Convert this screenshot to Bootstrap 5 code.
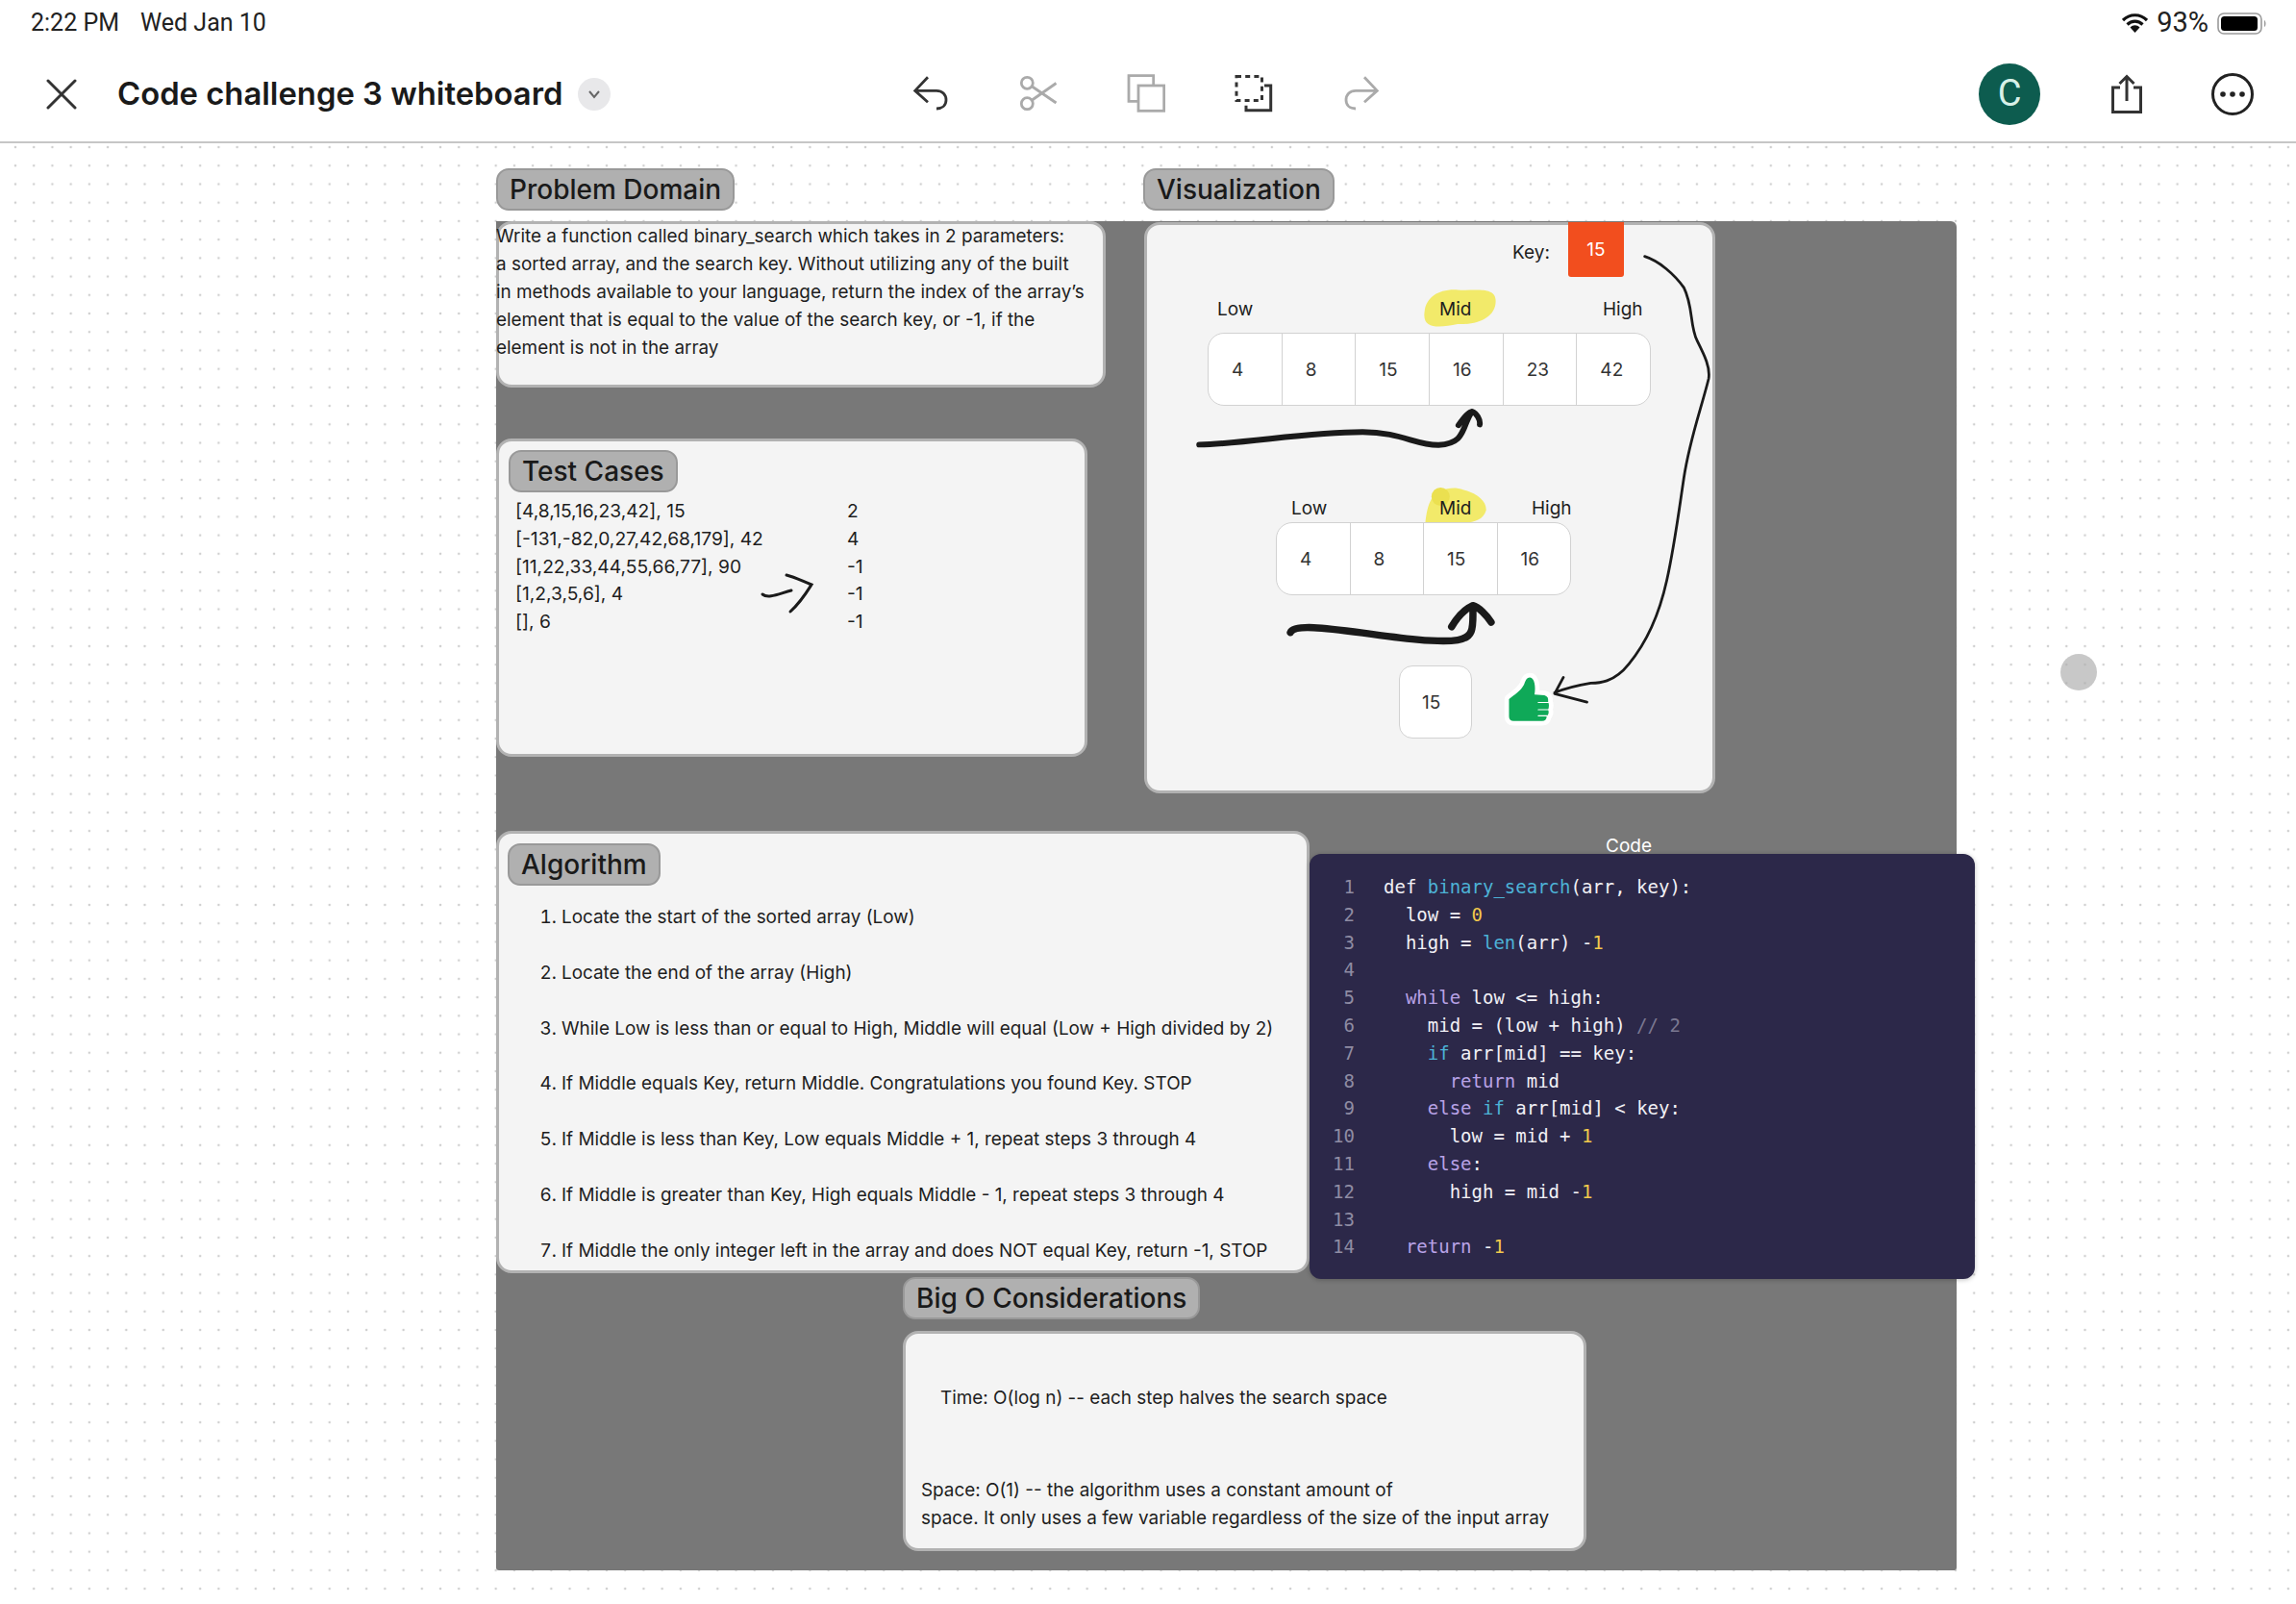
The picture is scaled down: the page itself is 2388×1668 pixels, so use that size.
<!DOCTYPE html>
<html>
<head>
  <title>Code challenge 3 whiteboard</title>
  <meta charset="UTF-8">
  <link href="https://cdn.jsdelivr.net/npm/bootstrap@5.3.2/dist/css/bootstrap.min.css" rel="stylesheet">
  <style>
    html, body {
      margin: 0;
      width: 2388px;
      height: 1668px;
      overflow: hidden;
      background: #fff;
      font-family: Inter, "Liberation Sans", sans-serif;
      color: #1e1e1e;
    }

    .top-area {
      height: 149px;
      border-bottom: 2px solid #c6c6c6;
    }

    .status-bar {
      height: 48px;
      padding: 0 30px 0 32px;
      font-family: Roboto, "Liberation Sans", sans-serif;
      font-size: 25px;
      color: #222;
    }

    .status-date { margin-left: 22px; }
    .status-pct { margin: 0 9px 0 9px; font-size: 29px; }

    .tool-bar {
      height: 99px;
      padding: 0 44px 0 48px;
    }

    .board-title {
      font-size: 32.8px;
      font-weight: 600;
      margin-left: 42px;
      color: #1a1a1a;
      white-space: nowrap;
    }

    .title-chevron {
      width: 34px;
      height: 34px;
      background: #e8e8ea;
      margin-left: 16px;
    }

    .edit-tools {
      gap: 72px;
      margin-left: 313px;
      margin-top: -1px;
    }

    .user-avatar {
      width: 64px;
      height: 64px;
      background: #0d5c4f;
      color: #d8f0e8;
      font-family: Roboto, "Liberation Sans", sans-serif;
      font-size: 38px;
      margin-right: 73px;
    }

    .share-icon { margin-right: 71px; }

    .canvas {
      height: 1519px;
      background-image: radial-gradient(circle, #cfcfcf 1.1px, transparent 1.6px);
      background-size: 19.23px 19.23px;
      background-position: 6.4px -5.6px;
    }

    .gray-panel {
      left: 516px;
      top: 81px;
      width: 1519px;
      height: 1403px;
      background: #787878;
      border-radius: 0 6px 3px 3px;
    }

    .wb-card {
      background: #f4f4f4;
      border: 3px solid #b2b2b2;
      border-radius: 16px;
      font-size: 18.9px;
      line-height: 29px;
      color: #1e1e1e;
    }

    .wb-label {
      background: #b0b0b0;
      border: 2px solid #999;
      border-radius: 13px;
      height: 44px;
      padding: 0 12px;
      font-size: 28px;
      font-weight: 500;
      line-height: 40px;
      color: #1a1a1a;
      white-space: nowrap;
    }

    .label-problem { left: 516px; top: 26px; }
    .label-viz { left: 1189px; top: 26px; }
    .label-test { left: 10px; top: 9px; }
    .label-algo { left: 9px; top: 10px; }
    .label-big { left: 939px; top: 1179px; }

    .card-problem { left: 516px; top: 81px; width: 634px; height: 173px; }
    .card-problem p { margin: -2px 0 0 -3px; }

    .card-test { left: 516px; top: 307px; width: 615px; height: 331px; padding: 58px 0 0 17px; font-size: 19.2px; line-height: 28.8px; }
    .test-input { width: 345px; }

    .card-viz { left: 1190px; top: 82px; width: 594px; height: 594px; }

    .card-algo { left: 516px; top: 715px; width: 846px; height: 460px; padding: 72px 0 0 0; }
    .card-algo ol { margin: 0; padding-left: 65px; }
    .card-algo li { margin-bottom: 28.8px; white-space: nowrap; }

    .card-big { left: 939px; top: 1235px; width: 711px; height: 229px; padding: 52px 0 0 16px; }
    .card-big p { margin: 0; }
    .time-line { padding-left: 20px; margin-bottom: 67px !important; }

    .viz-text { font-size: 19px; line-height: 29px; white-space: nowrap; }
    .key-text { left: 380px; top: 14px; }
    .key-box {
      left: 438px;
      top: -3px;
      width: 58px;
      height: 57px;
      background: #f24e1e;
      color: #fff;
      font-size: 19px;
      border-radius: 0 0 3px 3px;
    }

    .low-a { left: 73px; top: 73px; }
    .mid-a { left: 304px; top: 73px; }
    .high-a { left: 474px; top: 73px; }
    .low-b { left: 150px; top: 280px; }
    .mid-b { left: 304px; top: 280px; }
    .high-b { left: 400px; top: 280px; }

    .array-row {
      height: 76px;
      background: #fff;
      border: 1.5px solid #d2d2d2;
      border-radius: 17px;
      color: #333;
      font-size: 19px;
    }

    .array-a { left: 63px; top: 112px; width: 461px; }
    .array-b { left: 134px; top: 309px; width: 307px; }
    .array-cell {
      flex: 1 1 0;
      padding-left: 24px;
      border-left: 1.5px solid #d2d2d2;
      display: flex;
      align-items: center;
    }
    .array-cell:first-child { border-left: 0; }

    .answer-box {
      left: 262px;
      top: 458px;
      width: 76px;
      height: 76px;
      background: #fff;
      border: 1.5px solid #d2d2d2;
      border-radius: 14px;
      color: #333;
      font-size: 19px;
      padding-left: 23px;
    }

    .viz-ink {
      left: -13px;
      top: -14px;
      width: 620px;
      height: 620px;
      overflow: visible;
    }

    .test-ink { left: 272px; top: 128px; width: 60px; height: 48px; overflow: visible; }

    .code-title {
      left: 1362px;
      top: 717px;
      width: 664px;
      text-align: center;
      color: #fff;
      font-size: 19px;
      line-height: 28px;
    }

    .code-block {
      left: 1362px;
      top: 739px;
      width: 692px;
      height: 442px;
      background: #2c2849;
      border-radius: 12px;
      padding-top: 20px;
      box-shadow: 0 1px 5px rgba(0,0,0,.25);
      font-family: "DejaVu Sans Mono", "Liberation Mono", monospace;
      font-size: 19px;
      line-height: 28.8px;
      color: #f1f0f5;
    }

    .code-nums {
      width: 47px;
      text-align: right;
      color: #8f8ca3;
      margin-right: 30px;
    }

    .code-lines { margin: 0; font: inherit; color: inherit; overflow: visible; }
    .tk-fn { color: #4db2d6; }
    .tk-kw { color: #b8a2e6; }
    .tk-if { color: #4db2d6; }
    .tk-num { color: #f2c94c; }
    .tk-cm { color: #7b7891; }

    .pointer-dot {
      left: 2143px;
      top: 531px;
      width: 38px;
      height: 38px;
      background: rgba(170,170,170,.65);
    }
  </style>
</head>
<body>

<div class="top-area bg-white">
  <div class="status-bar d-flex align-items-center">
    <span>2:22 PM</span>
    <span class="status-date">Wed Jan 10</span>
    <span class="ms-auto d-flex align-items-center">
      <svg width="27" height="20" viewBox="0 0 27 20">
        <path d="M1 7 C8 0 19 0 26 7" fill="none" stroke="#111" stroke-width="3.2"/>
        <path d="M5.5 11.5 C10 7 17 7 21.5 11.5" fill="none" stroke="#111" stroke-width="3.2"/>
        <path d="M8.5 14.5 C11.5 11.5 15.5 11.5 18.5 14.5 L13.5 20 Z" fill="#111"/>
      </svg>
      <span class="status-pct">93%</span>
      <svg width="52" height="23" viewBox="0 0 52 23">
        <rect x="1" y="1" width="45" height="21" rx="6" fill="none" stroke="#9a9a9a" stroke-width="1.6"/>
        <rect x="4" y="4" width="38" height="15" rx="3.5" fill="#000"/>
        <path d="M49 8 C51 9 51 14 49 15 Z" fill="#9a9a9a"/>
      </svg>
    </span>
  </div>

  <div class="tool-bar d-flex align-items-center">
    <svg width="32" height="32" viewBox="0 0 32 32">
      <path d="M2 2 L30 30 M30 2 L2 30" stroke="#333" stroke-width="3" stroke-linecap="round"/>
    </svg>
    <span class="board-title">Code challenge 3 whiteboard</span>
    <span class="title-chevron rounded-circle d-flex align-items-center justify-content-center">
      <svg width="14" height="10" viewBox="0 0 14 10">
        <path d="M2 2 L7 8 L12 2" fill="none" stroke="#666" stroke-width="2"/>
      </svg>
    </span>

    <div class="edit-tools d-flex align-items-center">
      <svg width="40" height="40" viewBox="0 0 40 40" fill="none" stroke="#333" stroke-width="2.8">
        <path d="M17 3.3 L3.7 17.3 L17 29.3 M3.7 17.3 H26 C32 17.3 36 21.5 36 27 C36 32.5 32 36 26 36"/>
      </svg>
      <svg width="40" height="40" viewBox="0 0 40 40" fill="none" stroke="#aaa" stroke-width="2.8">
        <circle cx="8.3" cy="9.3" r="6"/>
        <circle cx="8.3" cy="30.7" r="6"/>
        <path d="M13.5 13 L38.5 30 M13.5 27 L38.5 9.5"/>
      </svg>
      <svg width="40" height="40" viewBox="0 0 40 40" fill="none" stroke="#aaa" stroke-width="2.8">
        <path d="M12 28.3 H2 V1.7 H27.7 V12"/>
        <rect x="12" y="12" width="26.7" height="26.3"/>
      </svg>
      <svg width="40" height="40" viewBox="0 0 40 40" fill="none" stroke="#333" stroke-width="3">
        <rect x="2" y="2.5" width="26.5" height="25" stroke-dasharray="5 4.2"/>
        <path d="M31 12 H37.7 V37.7 H12 V32.7"/>
      </svg>
      <svg width="40" height="40" viewBox="0 0 40 40" fill="none" stroke="#aaa" stroke-width="2.8">
        <path d="M23 3.3 L36.3 17.3 L23 29.3 M36.3 17.3 H14 C8 17.3 4 21.5 4 27 C4 32.5 8 36 14 36"/>
      </svg>
    </div>

    <div class="d-flex align-items-center ms-auto">
      <span class="user-avatar rounded-circle d-flex align-items-center justify-content-center">C</span>
      <svg class="share-icon" width="34" height="42" viewBox="0 0 34 42" fill="none" stroke="#333" stroke-width="3">
        <path d="M10 14 H2.5 V39.5 H31.5 V14 H24"/>
        <path d="M17 28 V3 M9.5 10 L17 2.5 L24.5 10"/>
      </svg>
      <svg width="44" height="44" viewBox="0 0 44 44">
        <circle cx="22" cy="22" r="20.5" fill="none" stroke="#222" stroke-width="3"/>
        <circle cx="12" cy="22" r="2.8" fill="#222"/>
        <circle cx="22" cy="22" r="2.8" fill="#222"/>
        <circle cx="32" cy="22" r="2.8" fill="#222"/>
      </svg>
    </div>
  </div>
</div>

<div class="canvas position-relative">
  <div class="gray-panel position-absolute"></div>

  <div class="wb-label label-problem position-absolute">Problem Domain</div>
  <div class="wb-label label-viz position-absolute">Visualization</div>

  <div class="wb-card card-problem position-absolute">
    <p>Write a function called binary_search which takes in 2 parameters:<br>a sorted array, and the search key. Without utilizing any of the built<br>in methods available to your language, return the index of the array’s<br>element that is equal to the value of the search key, or -1, if the<br>element is not in the array</p>
  </div>

  <div class="wb-card card-test position-absolute">
    <div class="wb-label label-test position-absolute">Test Cases</div>
    <div class="d-flex"><span class="test-input">[4,8,15,16,23,42], 15</span><span>2</span></div>
    <div class="d-flex"><span class="test-input">[-131,-82,0,27,42,68,179], 42</span><span>4</span></div>
    <div class="d-flex"><span class="test-input">[11,22,33,44,55,66,77], 90</span><span>-1</span></div>
    <div class="d-flex"><span class="test-input">[1,2,3,5,6], 4</span><span>-1</span></div>
    <div class="d-flex"><span class="test-input">[], 6</span><span>-1</span></div>
    <svg class="test-ink position-absolute" viewBox="0 0 60 48" fill="none" stroke="#1a1a1a" stroke-width="3" stroke-linecap="round">
      <path d="M2 31 C8 36 20 30 32 27"/>
      <path d="M27 11 C35 13 43 17 53 21 C48 29 42 39 31 49"/>
    </svg>
  </div>

  <div class="wb-card card-viz position-absolute">
    <svg class="viz-ink position-absolute" viewBox="0 0 1568 1568">
      <path d="M763 262 C768 225 800 203 850 206 C890 210 950 195 950 235 C950 280 900 298 850 296 C800 306 755 310 763 262 Z" fill="#f2ea6a"/>
      <path d="M765 818 C770 780 775 725 845 727 C890 735 925 755 925 785 C915 818 880 818 850 818 Z" fill="#f2ea6a"/>
      <circle cx="805" cy="750" r="24" fill="#ebe050"/>
    </svg>

    <span class="viz-text key-text position-absolute">Key:</span>
    <div class="key-box position-absolute d-flex align-items-center justify-content-center">15</div>

    <span class="viz-text low-a position-absolute">Low</span>
    <span class="viz-text mid-a position-absolute">Mid</span>
    <span class="viz-text high-a position-absolute">High</span>
    <div class="array-row array-a position-absolute d-flex">
      <div class="array-cell">4</div>
      <div class="array-cell">8</div>
      <div class="array-cell">15</div>
      <div class="array-cell">16</div>
      <div class="array-cell">23</div>
      <div class="array-cell">42</div>
    </div>

    <span class="viz-text low-b position-absolute">Low</span>
    <span class="viz-text mid-b position-absolute">Mid</span>
    <span class="viz-text high-b position-absolute">High</span>
    <div class="array-row array-b position-absolute d-flex">
      <div class="array-cell">4</div>
      <div class="array-cell">8</div>
      <div class="array-cell">15</div>
      <div class="array-cell">16</div>
    </div>

    <div class="answer-box position-absolute d-flex align-items-center">15</div>

    <svg class="viz-ink position-absolute" viewBox="0 0 1568 1568" fill="none" stroke="#1a1a1a" stroke-linecap="round" stroke-linejoin="round">
      <path stroke-width="15" d="M170 613 C300 610 450 580 600 580 C700 580 740 615 800 614 C870 610 860 570 885 530 M852 562 C868 540 878 528 888 526 C900 530 910 548 908 560"/>
      <path stroke-width="19" d="M410 1107 C420 1085 500 1095 600 1108 C700 1122 800 1135 850 1127 C895 1120 890 1090 890 1042 M834 1092 C850 1065 870 1045 890 1036 C905 1040 925 1060 938 1080"/>
      <path stroke-width="7" d="M1342 118 C1380 130 1420 165 1445 200 C1470 250 1460 300 1480 340 C1500 380 1515 410 1510 440 C1490 520 1460 600 1445 700 C1430 800 1420 880 1400 970 C1380 1060 1350 1130 1300 1190 C1260 1240 1220 1240 1200 1240 C1170 1245 1130 1255 1105 1265 M1128 1225 L1105 1268 L1190 1290"/>
      <path d="M1040 1225 C1030 1225 1028 1235 1024 1245 C1015 1262 1000 1270 985 1282 L985 1328 Q985 1340 997 1340 L1072 1340 Q1084 1340 1084 1328 Q1092 1320 1088 1310 Q1092 1298 1088 1290 Q1090 1275 1078 1272 L1052 1270 C1056 1250 1052 1225 1040 1225 Z" fill="#0fa958" stroke="#fff" stroke-width="24" paint-order="stroke"/>
      <path d="M1062 1291 H1090 M1062 1310 H1090 M1062 1326 H1086" stroke="#fff" stroke-width="3"/>
    </svg>
  </div>

  <div class="wb-card card-algo position-absolute">
    <div class="wb-label label-algo position-absolute">Algorithm</div>
    <ol>
      <li>Locate the start of the sorted array (Low)</li>
      <li>Locate the end of the array (High)</li>
      <li>While Low is less than or equal to High, Middle will equal (Low + High divided by 2)</li>
      <li>If Middle equals Key, return Middle. Congratulations you found Key. STOP</li>
      <li>If Middle is less than Key, Low equals Middle + 1, repeat steps 3 through 4</li>
      <li>If Middle is greater than Key, High equals Middle - 1, repeat steps 3 through 4</li>
      <li>If Middle the only integer left in the array and does NOT equal Key, return -1, STOP</li>
    </ol>
  </div>

  <div class="code-title position-absolute">Code</div>
  <div class="code-block position-absolute d-flex">
    <div class="code-nums">1<br>2<br>3<br>4<br>5<br>6<br>7<br>8<br>9<br>10<br>11<br>12<br>13<br>14</div>
<pre class="code-lines">def <span class="tk-fn">binary_search</span>(arr, key):
  low = <span class="tk-num">0</span>
  high = <span class="tk-fn">len</span>(arr) -<span class="tk-num">1</span>

  <span class="tk-kw">while</span> low &lt;= high:
    mid = (low + high) <span class="tk-cm">// 2</span>
    <span class="tk-if">if</span> arr[mid] == key:
      <span class="tk-kw">return</span> mid
    <span class="tk-kw">else</span> <span class="tk-if">if</span> arr[mid] &lt; key:
      low = mid + <span class="tk-num">1</span>
    <span class="tk-kw">else</span>:
      high = mid -<span class="tk-num">1</span>

  <span class="tk-kw">return</span> -<span class="tk-num">1</span></pre>
  </div>

  <div class="wb-label label-big position-absolute">Big O Considerations</div>
  <div class="wb-card card-big position-absolute">
    <p class="time-line">Time: O(log n) -- each step halves the search space</p>
    <p>Space: O(1) -- the algorithm uses a constant amount of<br>space. It only uses a few variable regardless of the size of the input array</p>
  </div>

  <div class="pointer-dot rounded-circle position-absolute"></div>
</div>

<script src="https://cdn.jsdelivr.net/npm/bootstrap@5.3.2/dist/js/bootstrap.bundle.min.js"></script>
</body>
</html>
